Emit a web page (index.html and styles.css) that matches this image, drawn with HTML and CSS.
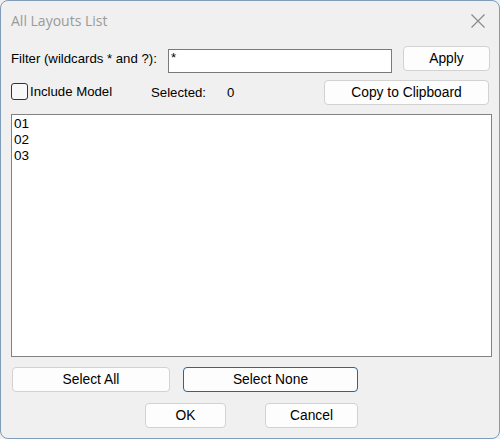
FILE: index.html
```html
<!DOCTYPE html>
<html>
<head>
<meta charset="utf-8">
<link rel="stylesheet" href="styles.css">
</head>
<body>
<div class="window">
  <div class="titlebar">
    <span class="title">All Layouts List</span>
    <svg class="close" width="16" height="16" viewBox="0 0 16 16"><path d="M1.5 1.5 L14.5 14.5 M14.5 1.5 L1.5 14.5" stroke="#8a8a8a" stroke-width="1.2" fill="none"/></svg>
  </div>
  <div class="row row1">
    <span class="label filter-label">Filter (wildcards * and ?):</span>
    <div class="input">*</div>
    <button class="btn apply">Apply</button>
  </div>
  <div class="row row2">
    <span class="check"></span>
    <span class="label include">Include Model</span>
    <span class="label selected">Selected:</span>
    <span class="label count">0</span>
    <button class="btn copy">Copy to Clipboard</button>
  </div>
  <div class="list">
    <div class="item">01</div>
    <div class="item">02</div>
    <div class="item">03</div>
  </div>
  <div class="row row3">
    <button class="btn selall">Select All</button>
    <button class="btn selnone">Select None</button>
  </div>
  <div class="row row4">
    <button class="btn ok">OK</button>
    <button class="btn cancel">Cancel</button>
  </div>
</div>
</body>
</html>
```
FILE: styles.css
```css
html, body {
  margin: 0;
  padding: 0;
  background: #f0f0f0;
}
.window {
  width: 500px;
  height: 439px;
  box-sizing: border-box;
  border: 1px solid #7f9cb8;
  border-radius: 8px;
  background: #f0f0f0;
  font-family: "Liberation Sans", Arial, sans-serif;
  font-size: 13.2px;
  color: #000;
  padding: 0 9px 0 10px;
  overflow: hidden;
}
.titlebar {
  height: 44px;
  display: flex;
  align-items: center;
  justify-content: space-between;
  padding-bottom: 6px;
  box-sizing: border-box;
}
.title {
  font-family: "Open Sans", "Noto Sans", sans-serif;
  font-size: 14px;
  color: #9a9a9a;
}
.close {
  margin-right: 4px;
  margin-top: 2px;
}
.row {
  display: flex;
  align-items: center;
}
.btn {
  box-sizing: border-box;
  height: 25px;
  border: 1px solid #d2d2d2;
  border-radius: 4px;
  background: #fdfdfd;
  font-family: "Liberation Sans", Arial, sans-serif;
  font-size: 13.8px;
  color: #000;
  padding: 0;
}
.row1 {
  height: 27px;
}
.filter-label {
  width: 157px;
}
.input {
  box-sizing: border-box;
  width: 224px;
  height: 24px;
  margin-top: 5px;
  border: 1px solid #7a7a7a;
  background: #fff;
  padding: 1px 2px;
  line-height: 14px;
}
.apply {
  width: 87px;
  margin-left: 11px;
}
.row2 {
  height: 25px;
  margin-top: 8px;
}
.check {
  box-sizing: border-box;
  width: 17px;
  height: 17px;
  border: 1px solid #333;
  border-radius: 3px;
  background: #f8f8f8;
  margin-top: -3px;
}
.include {
  margin-left: 2px;
  width: 121px;
  margin-top: -3px;
}
.selected {
  width: 76px;
}
.count {
  width: 97px;
}
.copy {
  width: 165px;
}
.list {
  box-sizing: border-box;
  width: 481px;
  height: 243px;
  margin-top: 9px;
  border: 1px solid #828282;
  background: #fff;
  padding: 1px 2px;
  font-size: 13.5px;
}
.item {
  line-height: 16px;
  height: 16px;
}
.row3 {
  margin-top: 10px;
}
.selall {
  width: 158px;
  margin-left: 1px;
}
.selnone {
  width: 175px;
  margin-left: 13px;
  border-color: #2a6498;
}
.row4 {
  margin-top: 11px;
}
.ok {
  width: 81px;
  margin-left: 134px;
}
.cancel {
  width: 93px;
  margin-left: 39px;
}
```
